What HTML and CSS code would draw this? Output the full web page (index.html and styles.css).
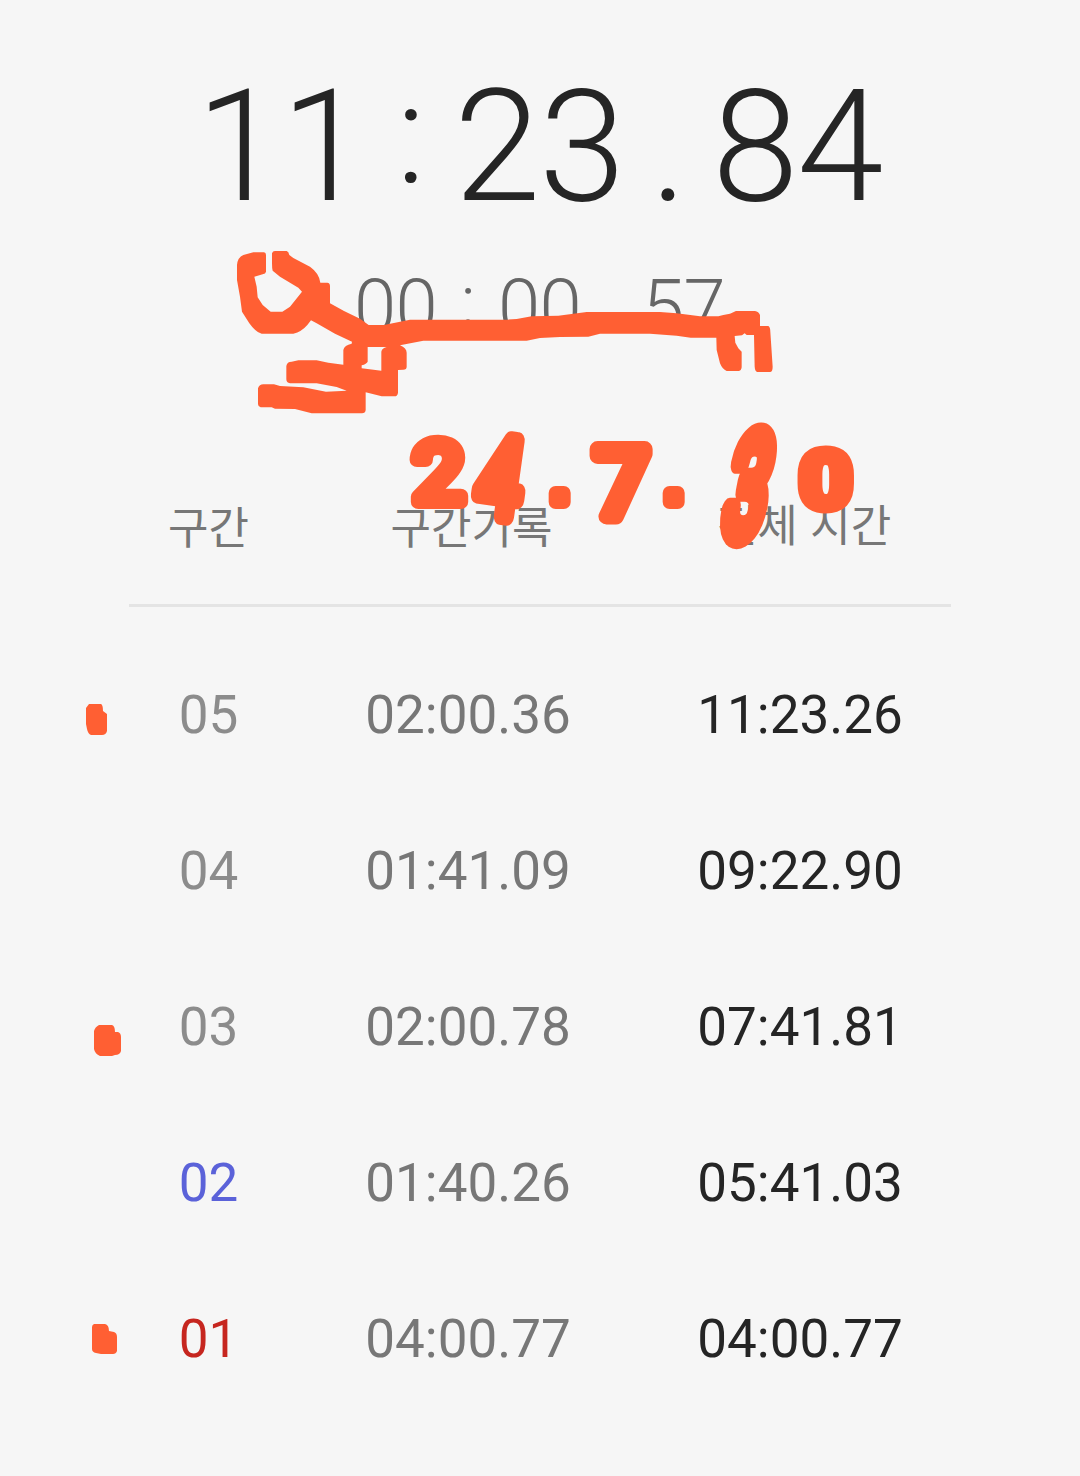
FILE: index.html
```html
<!DOCTYPE html>
<html lang="ko">
<head>
  <meta charset="UTF-8">
  <meta name="viewport" content="width=device-width, initial-scale=1.0">
  <title>스톱워치</title>
  <link rel="stylesheet" href="styles.css">
</head>
<body>
  <main class="stopwatch">
    <div class="timer">
      <span class="digits">11</span><span class="sep colon">:</span><span class="digits">23</span><span class="sep">.</span><span class="digits">84</span>
    </div>
    <div class="timer lap-timer">
      <span class="digits">00</span><span class="sep colon">:</span><span class="digits">00</span><span class="sep">.</span><span class="digits">57</span>
    </div>

    <section class="laps">
      <div class="lap-head">
        <span>구간</span>
        <span class="split-head">구간기록</span>
        <span class="total-head">전체 시간</span>
      </div>
      <div class="lap">
        <span class="num">05</span>
        <span class="split">02:00.36</span>
        <span class="total">11:23.26</span>
      </div>
      <div class="lap">
        <span class="num">04</span>
        <span class="split">01:41.09</span>
        <span class="total">09:22.90</span>
      </div>
      <div class="lap">
        <span class="num">03</span>
        <span class="split">02:00.78</span>
        <span class="total">07:41.81</span>
      </div>
      <div class="lap">
        <span class="num fastest">02</span>
        <span class="split">01:40.26</span>
        <span class="total">05:41.03</span>
      </div>
      <div class="lap">
        <span class="num slowest">01</span>
        <span class="split">04:00.77</span>
        <span class="total">04:00.77</span>
      </div>
    </section>

    <!-- pen marks over the page -->
    <svg class="marks" viewBox="0 0 1080 1476">
      <g transform="translate(220 240) scale(.33333)">
        <path fill-rule="evenodd" d="M70,45 L100,37 H132 Q138,38 138,45 V95 Q137,101 128,103 L103,110 L110,140 L113,172 L128,195 L152,215 H187 L210,200 L246,155 L235,143 L180,110 L158,92 Q156,85 156,70 V40 Q158,33 165,33 H200 Q206,35 208,45 L220,54 L270,80 Q298,100 301,128 H322 Q330,129 330,138 V190 L372,213 L420,236 L446,255 H492 L570,239 H860 L890,237 L935,229 L1015,227 L1100,216 H1320 L1370,220 L1440,229 H1495 L1510,225 L1530,221 L1548,213 H1605 Q1616,214 1620,225 V258 H1645 Q1651,262 1651,275 L1658,380 Q1658,396 1650,396 H1612 Q1605,394 1604,380 L1602,285 H1580 L1574,280 L1566,286 L1544,288 L1546,308 L1555,325 L1565,335 V382 Q1564,393 1555,393 H1520 Q1507,388 1500,370 L1490,330 L1489,293 H1412 L1370,287 L1290,281 H1140 L1105,290 L1020,291 L960,294 L920,302 H610 L540,316 Q560,325 560,338 V380 Q560,389 550,389 L534,390 V458 Q533,469 523,469 H485 L437,457 V510 Q436,520 426,520 H275 L225,507 L165,506 L155,502 H122 Q114,500 114,492 V445 Q118,433 130,433 H162 L180,438 L250,442 L318,455 L380,452 L350,441 L290,430 H210 Q199,428 199,418 V378 Q201,365 215,365 L235,361 H290 L325,368 L370,374 V330 Q373,315 395,311 L396,305 L345,281 L290,250 L273,241 L262,255 Q245,275 220,281 H125 Q105,275 88,250 L66,215 L60,170 L51,120 V75 Q53,52 70,45 Z M443,321 V365 Q440,372 425,376 V385 L484,392 V335 Q486,324 500,321 Z"/>
      </g>
      <path d="M89,704 H101 Q103,705 103,711 L107,714 V731 Q106,735 102,735 H91 Q88,734 87,729 L86,724 V708 Z"/>
      <path d="M99,1025 H112 Q115,1026 115,1032 H118 Q121,1033 121,1037 V1051 Q120,1055 115,1055 L112,1056 H100 Q95,1054 94,1049 V1031 Q95,1027 99,1025 Z"/>
      <path d="M94,1324 H105 Q109,1325 109,1331 L114,1332 Q117,1333 117,1337 V1351 Q116,1354 113,1354 H101 L96,1353 Q92,1352 92,1349 V1327 Q92,1325 94,1324 Z"/>
      <g class="date">
        <text transform="translate(413 502) scale(1.08 1)">2</text>
        <text transform="translate(473 512) rotate(8) scale(.94 1.28)">4</text>
        <text class="dot" transform="translate(548 502)">.</text>
        <text transform="translate(594 516) scale(1.16 1.13)">7</text>
        <text class="dot" transform="translate(662 502)">.</text>
        <text transform="translate(719 536) skewX(-11) scale(.88 1.68)">3</text>
        <text class="zero" transform="translate(801 506) scale(1.05 .88)">0</text>
      </g>
    </svg>
  </main>
</body>
</html>
```
FILE: styles.css
```css
* {
  box-sizing: border-box;
  margin: 0;
  padding: 0;
}

body {
  font-family: Roboto, 'Noto Sans CJK KR', sans-serif;
  background: #f6f6f6;
  color: #252525;
}

.stopwatch {
  position: relative;
  height: 1476px;
  padding-top: 55px;
  overflow: hidden;
}

.timer {
  display: flex;
  justify-content: center;
  height: 183px;
  line-height: 183px;
  font-size: 156px;
  font-weight: 300;
}

.digits {
  width: 172px;
  letter-spacing: -1.6px;
  white-space: nowrap;
}

.sep {
  width: 86px;
  text-align: center;
}

.colon {
  font-size: 140px;
  transform: translateY(-12px);
}

.lap-timer {
  height: 90px;
  line-height: 90px;
  margin-top: 24px;
  font-size: 76px;
  color: #666;
}

.lap-timer .digits {
  width: 84px;
  letter-spacing: -0.7px;
}

.lap-timer .sep {
  width: 60px;
}

.lap-timer .colon {
  font-size: 70px;
  transform: translateY(-6px);
}

.laps {
  width: 822px;
  margin: 0 auto;
}

.lap-head,
.lap {
  display: grid;
  grid-template-columns: 159px 360px 303px;
  text-align: center;
}

.lap-head {
  height: 255px;
  padding-top: 140px;
  border-bottom: 3px solid #e4e4e4;
  font-family: 'Noto Sans CJK KR', sans-serif;
  font-size: 44px;
  line-height: 66px;
  color: #777;
}

.split-head {
  padding-left: 7px;
}

.total-head {
  margin-top: -2px;
  padding-left: 9px;
}

.lap {
  height: 156px;
  font-size: 53px;
  line-height: 156px;
}

.lap-head + .lap {
  margin-top: 30px;
}

.num {
  color: #8c8c8c;
}

.split {
  color: #777;
}

.total {
  padding-left: 1px;
}

.fastest {
  color: #5b62d9;
}

.slowest {
  color: #c6261f;
}

.marks {
  position: absolute;
  top: 0;
  left: 0;
  width: 1080px;
  height: 1476px;
  fill: #ff5f33;
}

.date {
  font-size: 84px;
  stroke: #ff5f33;
  stroke-width: 14px;
  stroke-linejoin: round;
}

.date .dot {
  font-family: 'Liberation Sans', sans-serif;
}

.date .zero {
  stroke-width: 16px;
}
```
